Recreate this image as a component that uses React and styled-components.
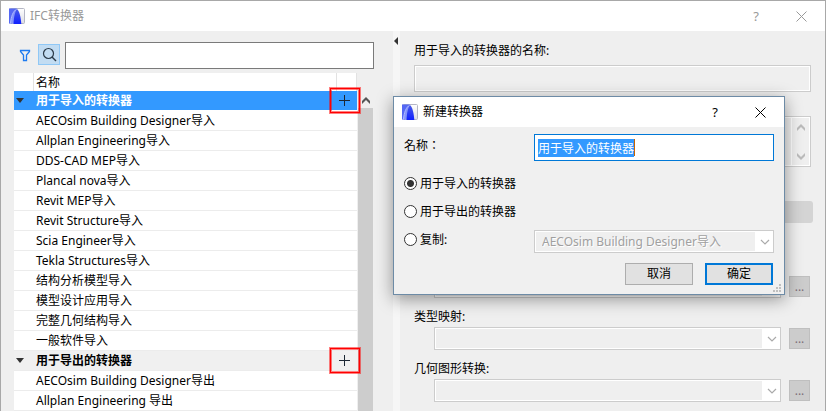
import React from "react";
import styled, { createGlobalStyle, css } from "styled-components";

const GlobalStyle = createGlobalStyle`
  * {
    box-sizing: border-box;
  }
  body {
    margin: 0;
    background: #efefef;
    color: #000;
    font-family: "Noto Sans", "Noto Sans CJK SC", sans-serif;
    font-size: 12px;
    line-height: 18px;
  }
  button, input, select, textarea {
    margin: 0;
    font: inherit;
    color: inherit;
  }
`;

const Window = styled.div`
  position: relative;
  display: flex;
  flex-direction: column;
  min-height: 100vh;
  border: 1px solid #a8a8a8;
  border-bottom: none;
`;

const TitleBar = styled.header`
  display: flex;
  align-items: center;
  height: 30px;
  padding: 0 18px 0 8px;
  background: #fff;
  color: ${(props) => (props.$active ? "#000" : "#999")};
`;

const Title = styled.h1`
  flex: 1;
  margin: 0 0 0 5px;
  font-size: 12px;
  font-weight: 400;
`;

const TitleButton = styled.button`
  display: flex;
  align-items: center;
  justify-content: center;
  width: 12px;
  height: 18px;
  margin-left: 33px;
  padding: 0;
  border: none;
  background: none;
  font-size: 13px;
`;

const Main = styled.main`
  display: flex;
  flex: 1;
`;

const ListPanel = styled.section`
  display: flex;
  flex-direction: column;
  flex: 0 0 392px;
  padding: 11px 19px 0 13px;
`;

const Toolbar = styled.div`
  display: flex;
  align-items: center;
  margin-bottom: 4px;
  padding-left: 5px;
`;

const FilterButton = styled.button`
  display: flex;
  width: 12px;
  padding: 0;
  border: none;
  background: none;
`;

const SearchButton = styled.button`
  display: flex;
  align-items: center;
  justify-content: center;
  width: 22px;
  height: 21px;
  margin: 0 5px 2px 7px;
  padding: 0;
  border: 1px solid #90c8f6;
  background: #c2dcf2;
`;

const SearchInput = styled.input`
  flex: 1;
  min-width: 0;
  height: 27px;
  padding: 0 4px;
  border: 1px solid #7a7a7a;
  background: #fff;
`;

const ListArea = styled.div`
  display: flex;
  flex: 1;
  gap: 1px;
  padding-right: 1px;
`;

const Table = styled.table`
  flex: 1;
  align-self: flex-start;
  border-collapse: separate;
  border-spacing: 0;
  table-layout: fixed;
  background: #fff;
`;

const HeadCell = styled.th`
  width: ${(props) => props.$width || "auto"};
  height: 18px;
  padding: 0 0 0 2px;
  border-right: 1px solid #e2e2e2;
  font-weight: 400;
  line-height: 17px;
  text-align: left;
`;

const Cell = styled.td`
  height: 20px;
  padding: 0 0 0 2px;
  border-bottom: 1px solid #ececec;
  white-space: nowrap;
`;

const Row = styled.tr`
  ${(props) =>
    props.$group &&
    css`
      background: #f0f0f0;
      font-weight: 700;
    `}
  ${(props) =>
    props.$selected &&
    css`
      background: #3399ff;
      color: #fff;
      ${Cell} {
        border-color: #fff;
      }
    `}
`;

const ToggleButton = styled.button`
  display: flex;
  padding: 0;
  border: none;
  background: none;
`;

const AddButton = styled.button`
  position: relative;
  display: flex;
  align-items: center;
  width: 11px;
  height: 19px;
  padding: 0;
  border: none;
  background: none;
`;

const Marker = styled.span`
  position: absolute;
  inset: -3px -10px -3px -9px;
  border: 1px solid #f00;
  box-shadow: 0 0 0 1px rgba(255, 0, 0, 0.5), inset 0 0 0 1px rgba(255, 0, 0, 0.5);
`;

const ScrollBar = styled.div`
  display: flex;
  flex-direction: column;
  align-items: center;
  width: 15px;
  padding-top: 24px;
`;

const ScrollThumb = styled.div`
  flex: 1;
  align-self: stretch;
  margin-top: 4px;
  background: #cdcdcd;
`;

const Splitter = styled.div`
  flex: 0 0 7px;
  padding: 6px 0 0 1px;
  background: #f6f6f6;
`;

const DetailPanel = styled.section`
  flex: 1;
  min-width: 0;
  padding: 11px 14px 9px;
`;

const Label = styled.label`
  display: block;
  height: 18px;
`;

const disabledBox = css`
  border: 1px solid #ccc;
  box-shadow: inset 0 0 0 1px #fff;
  background: #efefef;
`;

const NameInput = styled.input`
  ${disabledBox}
  display: block;
  width: 100%;
  height: 27px;
  margin-top: 5px;
`;

const DescriptionBox = styled.div`
  ${disabledBox}
  display: flex;
  height: 51px;
  margin-top: 24px;
  padding: 1px;
`;

const Description = styled.textarea`
  flex: 1;
  border: none;
  border-right: 1px solid #fff;
  background: none;
  resize: none;
`;

const DescriptionScroll = styled.div`
  display: flex;
  flex-direction: column;
  align-items: center;
  justify-content: space-between;
  width: 17px;
  padding: 6px 0 5px;
`;

const SectionButton = styled.button`
  display: block;
  width: calc(100% + 4px);
  height: 22px;
  margin: 34px -2px 52px;
  border: none;
  border-radius: 3px;
  background: #d4d4d4;
`;

const Field = styled.div`
  & + & {
    margin-top: 10px;
  }
`;

const FieldRow = styled.div`
  display: flex;
  align-items: center;
  gap: 8px;
  margin-top: 1px;
  padding: 0 1px 0 20px;
`;

const SelectBox = styled.div`
  position: relative;
  flex: 1;
  min-width: 0;

  svg {
    position: absolute;
    top: 9px;
    right: 4px;
    pointer-events: none;
  }
`;

const Select = styled.select`
  display: block;
  width: 100%;
  height: 23px;
  padding: 0 20px 0 7px;
  border: 1px solid #ccc;
  border-radius: 0;
  box-shadow: inset 0 0 0 1px #fff;
  background: linear-gradient(to left, #fff 18px, #efefef 18px);
  color: #a0a0a0;
  line-height: 21px;
  opacity: 1;
  appearance: none;
  text-shadow: 1px 1px 0 #fff;
`;

const MoreButton = styled.button`
  width: 21px;
  height: 21px;
  padding: 0;
  border: 1px solid #bfbfbf;
  background: #ccc;
  color: #7d6f78;
  line-height: 18px;
`;

const Dialog = styled.div`
  position: absolute;
  top: 95px;
  left: 392px;
  width: 392px;
  border: 1px solid #6d8ba6;
  background: #f0f0f0;
  box-shadow: 0 4px 16px rgba(0, 0, 0, 0.4);
`;

const DialogForm = styled.form`
  padding: 7px 10px 9px;
`;

const FormRow = styled.div`
  display: grid;
  grid-template-columns: 130px 1fr;
`;

// the TC face centres the full-width colon
const NameLabel = styled.label`
  padding-top: 2px;
  font-family: "Noto Sans CJK TC", sans-serif;
`;

const DialogInput = styled.input`
  width: 100%;
  height: 27px;
  padding: 0 3px;
  border: 1px solid #0078d7;
  border-radius: 0;
  outline: none;
  background: #fff linear-gradient(#c86400, #c86400) 99px 4px / 1px 17px no-repeat;
  line-height: 17px;

  &::selection {
    background: #3399ff;
    color: #fff;
  }
`;

const Options = styled.div`
  display: grid;
  grid-template-columns: 130px 1fr;
  grid-auto-rows: 27px;
  row-gap: 1px;
  align-items: end;
  margin-top: 9px;
`;

const Option = styled.label`
  display: flex;
  align-items: center;
  gap: 3px;
  height: 27px;
  grid-column: ${(props) => (props.$wide ? "1 / -1" : "1")};
`;

const Radio = styled.input`
  width: 13px;
  height: 13px;
  border: 1px solid #333;
  border-radius: 50%;
  background: #fff;
  appearance: none;

  &:checked {
    background: radial-gradient(circle, #333 3px, #fff 4px);
  }
`;

const Actions = styled.div`
  display: flex;
  justify-content: flex-end;
  gap: 12px;
  margin-top: 10px;
  padding-right: 1px;
`;

const ActionButton = styled.button`
  width: 68px;
  height: 22px;
  padding: 0;
  border: ${(props) => (props.$primary ? "2px solid #0078d7" : "1px solid #adadad")};
  background: #e1e1e1;
  line-height: 16px;
`;

const Grip = styled.svg`
  position: absolute;
  right: 3px;
  bottom: 2px;
`;

function Logo({ id }) {
  return (
    <svg width="16" height="16" viewBox="0 0 16 16" aria-hidden="true">
      <defs>
        <linearGradient id={`${id}-arch`} x1="0" y1="0" x2="0" y2="1">
          <stop offset="0" stopColor="#4a5ce6" />
          <stop offset="1" stopColor="#1020ff" />
        </linearGradient>
        <linearGradient id={`${id}-paper`} x1="0" y1="0" x2="0" y2="1">
          <stop offset="0" stopColor="#fff" />
          <stop offset="1" stopColor="#dcdce4" />
        </linearGradient>
      </defs>
      <rect x="0.5" y="0.5" width="15" height="15" rx="1" fill={`url(#${id}-paper)`} stroke="#b4b6c4" />
      <path d="M0 0.500H8L3 15.500H0Z" fill="#5568f4" />
      <path d="M1.500 15.500C2 9 4 3.500 8 1L6 15.500Z" fill="#8494fb" />
      <path d="M1.500 15.500C2 8.500 4 3 8 1" fill="none" stroke="#b3bdff" />
      <path d="M4.500 16C4.800 9 6 3.500 8 1C10.500 3 11.800 9 12.300 16Z" fill={`url(#${id}-arch)`} />
    </svg>
  );
}

function CloseIcon() {
  return (
    <svg width="11" height="11" viewBox="0 0 11 11" fill="none" stroke="currentColor" aria-hidden="true">
      <path d="M0.500 0.500L10.500 10.500M10.500 0.500L0.500 10.500" />
    </svg>
  );
}

function Chevron({ color }) {
  return (
    <svg width="10" height="6" viewBox="0 0 10 6" fill="none" stroke={color} strokeWidth="1.200" aria-hidden="true">
      <path d="M1 1L5 5L9 1" />
    </svg>
  );
}

function ScrollArrow({ up, color }) {
  return (
    <svg width="8" height="7" viewBox="0 0 8 7" fill={color} aria-hidden="true">
      <path d={up ? "M4 0L8 4V7L4 3L0 7V4Z" : "M4 7L8 3V0L4 4L0 0V3Z"} />
    </svg>
  );
}

function Group({ title, items, selected }) {
  return (
    <tbody>
      <Row $group $selected={selected}>
        <Cell>
          <ToggleButton aria-label="折叠">
            <svg width="8" height="5" viewBox="0 0 8 5" fill="#333" aria-hidden="true">
              <path d="M0 0H8L4 5Z" />
            </svg>
          </ToggleButton>
        </Cell>
        <Cell>{title}</Cell>
        <Cell>
          <AddButton aria-label="新建">
            <svg width="11" height="11" viewBox="0 0 11 11" stroke="#1c2733" aria-hidden="true">
              <path d="M5.500 0V11M0 5.500H11" />
            </svg>
            <Marker />
          </AddButton>
        </Cell>
      </Row>
      {items.map((item) => (
        <Row key={item}>
          <Cell />
          <Cell>{item}</Cell>
          <Cell />
        </Row>
      ))}
    </tbody>
  );
}

function MappingField({ id, label }) {
  return (
    <Field>
      {label && <Label htmlFor={id}>{label}</Label>}
      <FieldRow>
        <SelectBox>
          <Select id={id} disabled />
          <Chevron color="#aaa" />
        </SelectBox>
        <MoreButton disabled>...</MoreButton>
      </FieldRow>
    </Field>
  );
}

function NewTranslatorDialog() {
  return (
    <Dialog role="dialog" aria-labelledby="dialog-title">
      <TitleBar $active>
        <Logo id="dialog" />
        <Title as="h2" id="dialog-title">新建转换器</Title>
        <TitleButton>?</TitleButton>
        <TitleButton aria-label="关闭">
          <CloseIcon />
        </TitleButton>
      </TitleBar>
      <DialogForm onSubmit={(e) => e.preventDefault()}>
        <FormRow>
          <NameLabel htmlFor="new-name" lang="zh-TW">名称：</NameLabel>
          <DialogInput
            id="new-name"
            defaultValue="用于导入的转换器"
            autoFocus
            onFocus={(e) => e.target.select()}
          />
        </FormRow>
        <Options>
          <Option $wide>
            <Radio type="radio" name="kind" defaultChecked />
            用于导入的转换器
          </Option>
          <Option $wide>
            <Radio type="radio" name="kind" />
            用于导出的转换器
          </Option>
          <Option>
            <Radio type="radio" name="kind" />
            复制:
          </Option>
          <SelectBox>
            <Select aria-label="复制" disabled>
              <option>AECOsim Building Designer导入</option>
            </Select>
            <Chevron color="#aaa" />
          </SelectBox>
        </Options>
        <Actions>
          <ActionButton type="button">取消</ActionButton>
          <ActionButton $primary>确定</ActionButton>
        </Actions>
      </DialogForm>
      <Grip width="8" height="8" viewBox="0 0 8 8" fill="#bfbfbf" aria-hidden="true">
        <path d="M6 0h2v2h-2zM3 3h2v2h-2zM6 3h2v2h-2zM0 6h2v2h-2zM3 6h2v2h-2zM6 6h2v2h-2z" />
      </Grip>
    </Dialog>
  );
}

const importItems = [
  "AECOsim Building Designer导入",
  "Allplan Engineering导入",
  "DDS-CAD MEP导入",
  "Plancal nova导入",
  "Revit MEP导入",
  "Revit Structure导入",
  "Scia Engineer导入",
  "Tekla Structures导入",
  "结构分析模型导入",
  "模型设计应用导入",
  "完整几何结构导入",
  "一般软件导入",
];

const exportItems = ["AECOsim Building Designer导出", "Allplan Engineering 导出"];

function App() {
  return (
    <Window>
      <GlobalStyle />
      <TitleBar>
        <Logo id="window" />
        <Title>IFC转换器</Title>
        <TitleButton>?</TitleButton>
        <TitleButton aria-label="关闭">
          <CloseIcon />
        </TitleButton>
      </TitleBar>
      <Main>
        <ListPanel>
          <Toolbar>
            <FilterButton aria-label="过滤">
              <svg width="12" height="13" viewBox="0 0 12 13" fill="none" stroke="#1e7bf0" strokeWidth="1.300" aria-hidden="true">
                <path d="M1.500 1.500H10.500V2.500L7.500 6V11.500H4.500V6L1.500 2.500Z" />
              </svg>
            </FilterButton>
            <SearchButton aria-label="搜索">
              <svg width="15" height="15" viewBox="0 0 15 15" fill="none" stroke="#2b3a48" aria-hidden="true">
                <circle cx="6.500" cy="6.500" r="5" strokeWidth="1.200" />
                <path d="M10 10L14 14" strokeWidth="1.400" />
              </svg>
            </SearchButton>
            <SearchInput type="text" aria-label="搜索" />
          </Toolbar>
          <ListArea>
            <Table>
              <thead>
                <tr>
                  <HeadCell $width="20px" />
                  <HeadCell>名称</HeadCell>
                  <HeadCell $width="20px" />
                </tr>
              </thead>
              <Group title="用于导入的转换器" items={importItems} selected />
              <Group title="用于导出的转换器" items={exportItems} />
            </Table>
            <ScrollBar>
              <ScrollArrow up color="#555" />
              <ScrollThumb />
            </ScrollBar>
          </ListArea>
        </ListPanel>
        <Splitter>
          <svg width="4" height="8" viewBox="0 0 4 8" fill="#333" display="block" aria-hidden="true">
            <path d="M4 0V8L0 4Z" />
          </svg>
        </Splitter>
        <DetailPanel>
          <Label htmlFor="name">用于导入的转换器的名称:</Label>
          <NameInput id="name" disabled />
          <DescriptionBox>
            <Description aria-label="说明" disabled />
            <DescriptionScroll>
              <ScrollArrow up color="#bbb" />
              <ScrollArrow color="#bbb" />
            </DescriptionScroll>
          </DescriptionBox>
          <SectionButton disabled aria-label="设置" />
          <MappingField id="property-mapping" />
          <MappingField id="type-mapping" label="类型映射:" />
          <MappingField id="geometry-conversion" label="几何图形转换:" />
        </DetailPanel>
      </Main>
      <NewTranslatorDialog />
    </Window>
  );
}

export default App;
